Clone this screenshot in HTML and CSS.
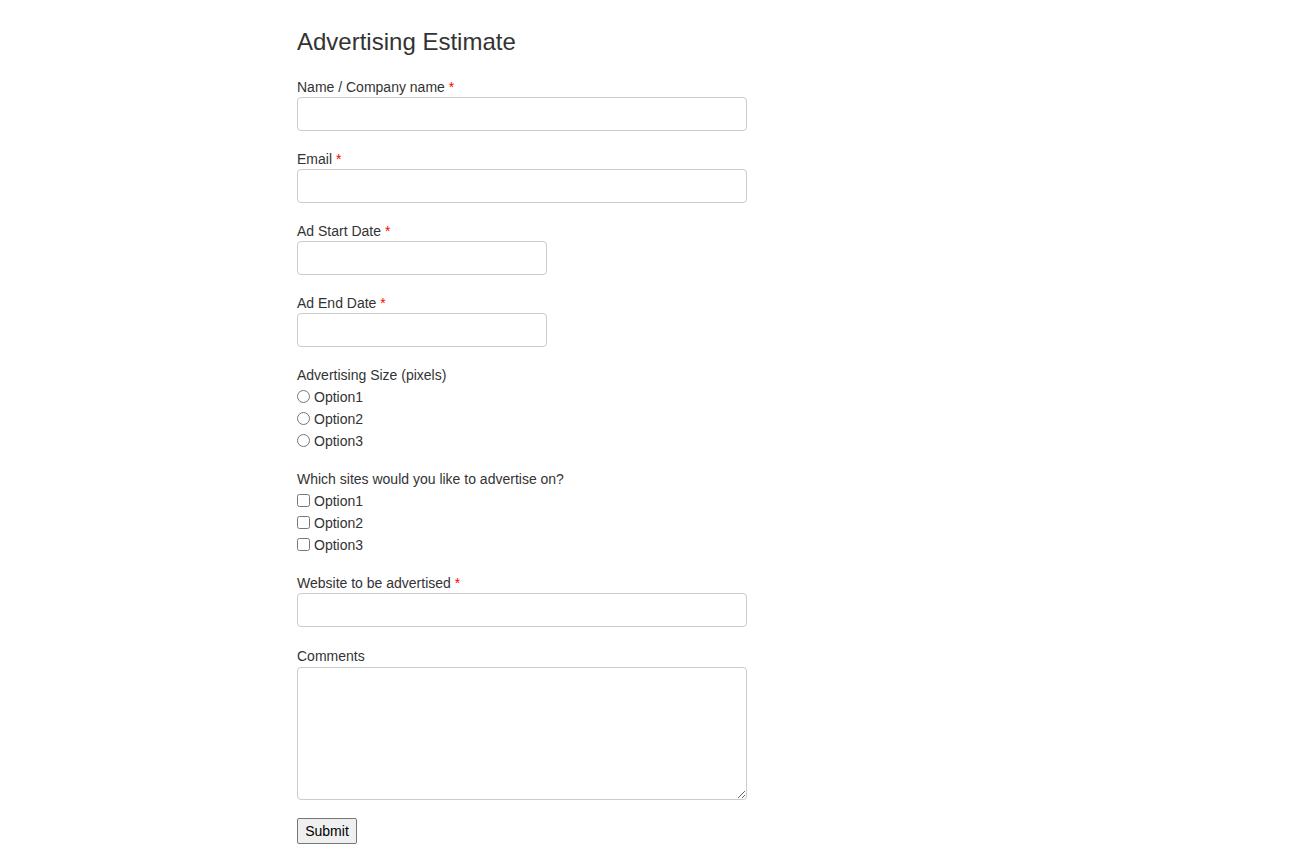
FILE: index.html
```html
<!DOCTYPE html>
<html lang="en">
<head>
<meta charset="utf-8">
<title>Advertising Estimate</title>
<link rel="stylesheet" href="styles.css">
</head>
<body>
<div class="page">
  <h1 class="title">Advertising Estimate</h1>
  <form class="form">
    <div class="group">
      <label class="label">Name / Company name <span class="req">*</span></label>
      <input class="field" type="text">
    </div>
    <div class="group">
      <label class="label">Email <span class="req">*</span></label>
      <input class="field" type="text">
    </div>
    <div class="group">
      <label class="label">Ad Start Date <span class="req">*</span></label>
      <input class="field field-short" type="text">
    </div>
    <div class="group">
      <label class="label">Ad End Date <span class="req">*</span></label>
      <input class="field field-short" type="text">
    </div>
    <div class="group">
      <label class="label">Advertising Size (pixels)</label>
      <div class="choices">
        <label class="choice"><input class="choice-input" type="radio" name="size"> Option1</label>
        <label class="choice"><input class="choice-input" type="radio" name="size"> Option2</label>
        <label class="choice"><input class="choice-input" type="radio" name="size"> Option3</label>
      </div>
    </div>
    <div class="group">
      <label class="label">Which sites would you like to advertise on?</label>
      <div class="choices">
        <label class="choice"><input class="choice-input" type="checkbox"> Option1</label>
        <label class="choice"><input class="choice-input" type="checkbox"> Option2</label>
        <label class="choice"><input class="choice-input" type="checkbox"> Option3</label>
      </div>
    </div>
    <div class="group">
      <label class="label">Website to be advertised <span class="req">*</span></label>
      <input class="field" type="text">
    </div>
    <div class="group group-comments">
      <label class="label">Comments</label>
      <textarea class="field area"></textarea>
    </div>
    <div class="group">
      <button class="submit" type="button">Submit</button>
    </div>
  </form>
</div>
</body>
</html>
```
FILE: styles.css
```css
html, body {
  margin: 0;
  padding: 0;
  background: #fff;
}
body {
  font-family: "Liberation Sans", Arial, sans-serif;
  font-size: 14px;
  line-height: 20px;
  color: #333;
}
.page {
  width: 705px;
  margin: 0 auto;
  padding: 28px 0 20px 0;
  box-sizing: border-box;
}
.title {
  margin: 0 0 21px 0;
  font-size: 24px;
  line-height: 28px;
  font-weight: normal;
  color: #333;
}
.form {
  display: flex;
  flex-direction: column;
  gap: 18px;
}
.group {
  display: flex;
  flex-direction: column;
  align-items: flex-start;
}
.group-comments {
  margin-top: 1px;
}
.label {
  display: block;
  line-height: 20px;
}
.req {
  color: #f00;
}
.field {
  display: block;
  box-sizing: border-box;
  width: 450px;
  height: 34px;
  margin: 0;
  border: 1px solid #ccc;
  border-radius: 4px;
  background: #fff;
  font-family: inherit;
  font-size: 14px;
  padding: 6px 12px;
}
.field-short {
  width: 250px;
}
.area {
  height: 133px;
  margin-top: 1px;
  resize: both;
}
.choices {
  display: flex;
  flex-direction: column;
  padding-top: 1px;
  margin-bottom: -1px;
}
.choice {
  display: flex;
  align-items: center;
  height: 22px;
  line-height: 22px;
}
.choice-input {
  margin: 0 4px 0 0;
  width: 13px;
  height: 13px;
  position: relative;
  top: -1px;
}
.submit {
  font-family: inherit;
  font-size: 14px;
  line-height: 18px;
  color: #000;
  padding: 0 7px;
  width: 60px;
  height: 26px;
  border: 1px solid #767676;
  border-radius: 2px;
  background: #efefef;
  margin: 0;
}
```
